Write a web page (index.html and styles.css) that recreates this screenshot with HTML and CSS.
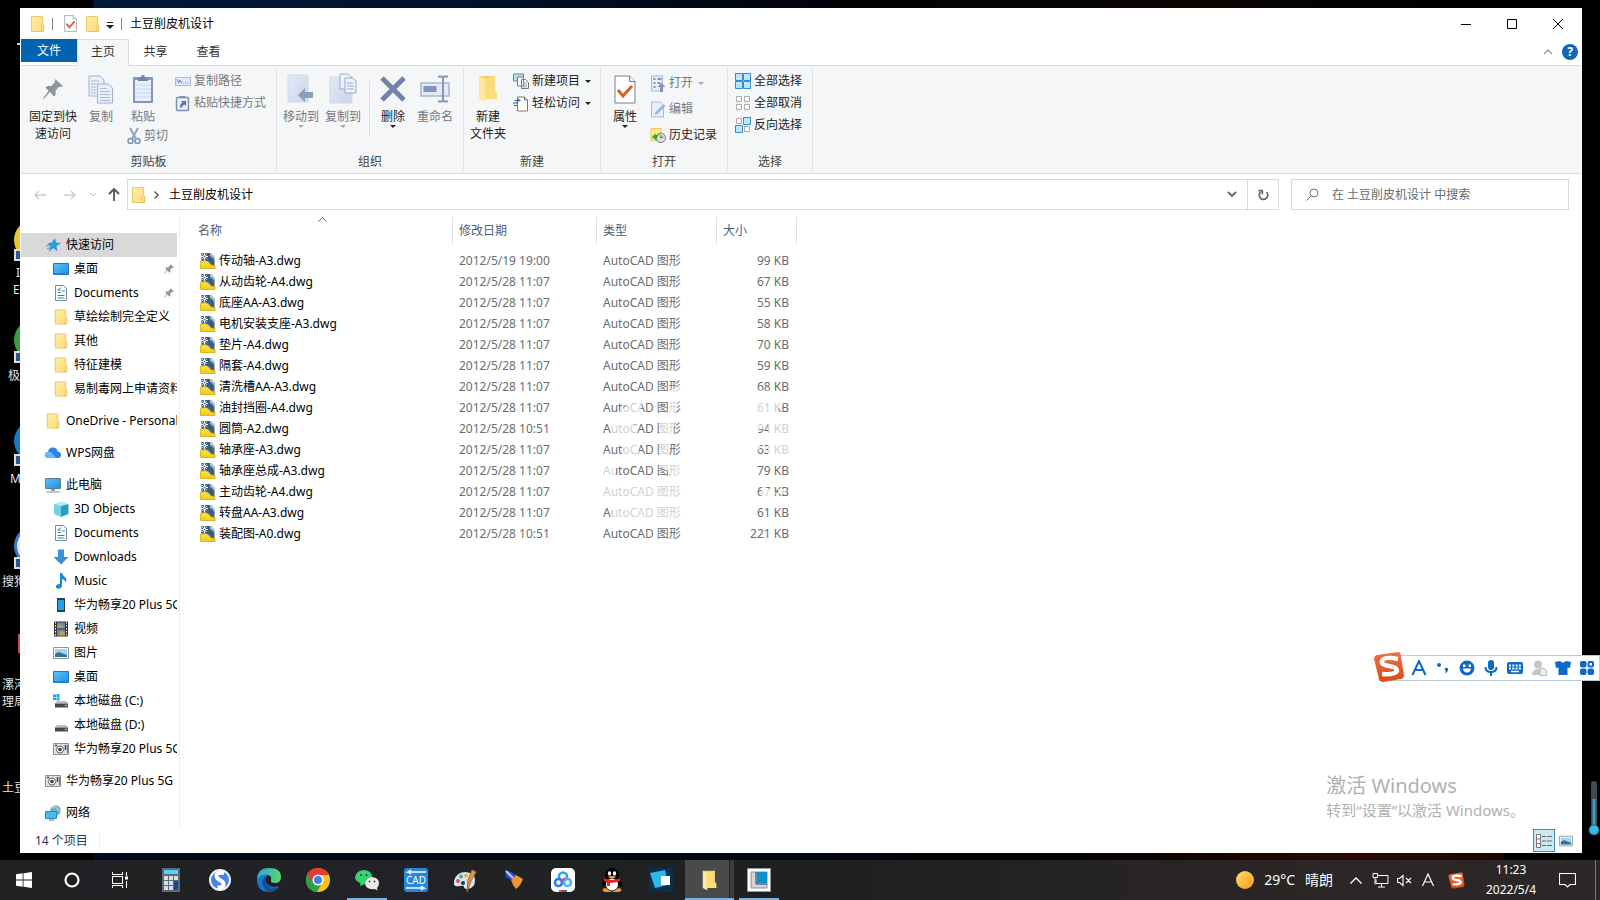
FILE: index.html
```html
<!DOCTYPE html>
<html lang="zh-CN">
<head>
<meta charset="utf-8">
<title>土豆削皮机设计</title>
<link rel="stylesheet" href="styles.css">
</head>
<body>
<svg class="defs" aria-hidden="true">
  <defs>
    <linearGradient id="gFolder" x1="0" y1="0" x2="1" y2="1"><stop offset="0" stop-color="#ffeeac"/><stop offset="1" stop-color="#fbdb75"/></linearGradient>
    <linearGradient id="gBlue" x1="0" y1="0" x2="1" y2="1"><stop offset="0" stop-color="#5cc4f8"/><stop offset="1" stop-color="#1d8ee0"/></linearGradient>
    <linearGradient id="gDwg" x1="0" y1="0" x2="0" y2="1"><stop offset="0" stop-color="#fbe25c"/><stop offset="1" stop-color="#f0cc10"/></linearGradient>
    <linearGradient id="gPale" x1="0" y1="0" x2="1" y2="1"><stop offset="0" stop-color="#e3eaf6"/><stop offset="1" stop-color="#c9d6ea"/></linearGradient>
    <linearGradient id="gSun" x1="0" y1="0" x2="1" y2="1"><stop offset="0" stop-color="#ffe06a"/><stop offset="1" stop-color="#f79a13"/></linearGradient>
    <linearGradient id="gEdge" x1="0" y1="0" x2="1" y2="0"><stop offset="0" stop-color="#2ba6e0"/><stop offset="1" stop-color="#5fd668"/></linearGradient>
    <linearGradient id="gSogou" x1="0" y1="0" x2="0" y2="1"><stop offset="0" stop-color="#ec7248"/><stop offset="1" stop-color="#dc4a12"/></linearGradient>
  </defs>
  <symbol id="folder" viewBox="0 0 16 18"><path d="M1.500 1h12v8.500l1 1V17h-13z" fill="url(#gFolder)" stroke="#e6c463"/><path d="M12.500 16.500v-6l1-1 1 1v6z" fill="#fff0b5" stroke="#dfb94c" stroke-width=".8"/></symbol>
  <symbol id="openfolder" viewBox="0 0 20 28"><path d="M1 1h16v15l2 2v6H6z" fill="#f7cf60"/><path d="M1 1l6 3v23l-6-3z" fill="#ffe9a2"/><path d="M7 4l10-3v15l2 2v6H7z" fill="#fbdc7d"/></symbol>
  <symbol id="pin" viewBox="0 0 20 20"><path d="M12 0l8 7-2 1-2-.3-3.500 4 .2 4L11 17.500 7 13 .8 20 0 19.500 5.500 12 2.500 8.500 4.500 7h4l3.500-4z" fill="#8d959e"/></symbol>
  <symbol id="check" viewBox="0 0 22 29"><path d="M1 1h14.500L21 6.500V28H1z" fill="#fff" stroke="#7d8186"/><path d="M15.500 1v5.500H21" fill="#f3f3f3" stroke="#7d8186"/><path d="M4 15l5 6 9-10" fill="none" stroke="#d8602b" stroke-width="3"/></symbol>
  <symbol id="copy" viewBox="0 0 26 29"><g fill="#e9f0fa" stroke="#9db2d0"><path d="M1 1h11l4 4v16H1z"/><path d="M9.500 9h11l4 4v15h-15z"/></g><path d="M3 6h8M3 9h6M3 12h5M3 15h5M3 18h5M12 13.500h7M12 16.500h10M12 19.500h10M12 22.500h10M12 25.500h10" stroke="#a9bbd6"/></symbol>
  <symbol id="paste" viewBox="0 0 22 30"><rect x="1" y="3" width="20" height="26" rx="1" fill="#8397b8"/><path d="M3 6h16v21H3z" fill="#e8effa"/><path d="M3 11h16M3 15h16M3 19h16M3 23h16" stroke="#c9d7eb"/><path d="M6 7V4h3q0-3 2-3t2 3h3v3z" fill="#7185a6"/></symbol>
  <symbol id="cut" viewBox="0 0 14 18"><path d="M3 1l6 11M11 1L5 12" stroke="#8ca3c4" stroke-width="2"/><circle cx="3.500" cy="14" r="2.500" fill="none" stroke="#7a92b8" stroke-width="1.500"/><circle cx="10.500" cy="14" r="2.500" fill="none" stroke="#7a92b8" stroke-width="1.500"/></symbol>
  <symbol id="path" viewBox="0 0 16 16"><rect x=".5" y="4.500" width="15" height="8" fill="#e0eafa" stroke="#a9bedd"/><path d="M2 6l1.500 4L5 7l1.500 3M7.500 10h1M10 10h1M12.500 10h1" fill="none" stroke="#7088ae"/></symbol>
  <symbol id="shortcut" viewBox="0 0 16 17"><rect x="1.500" y="2.500" width="12" height="13" rx="1" fill="#e8effa" stroke="#7c92b5" stroke-width="1.500"/><path d="M4.500 3V1h6v2z" fill="#7c92b5"/><path d="M5 12.500q0-4 2.500-5L6 6h5v5L9.500 9.500Q7 10.500 7 12.500z" fill="#5874a3"/></symbol>
  <symbol id="moveto" viewBox="0 0 28 30"><path d="M1 1h20v27H1z" fill="url(#gPale)" stroke="#d0daea"/><path d="M11 21l7-7v4h8v6h-8v4z" fill="#8b9ebd"/></symbol>
  <symbol id="copyto" viewBox="0 0 28 32"><path d="M1 4h22v26H1z" fill="url(#gPale)" stroke="#d0daea"/><g fill="#edf3fb" stroke="#97abc9"><path d="M11 1h8l3 3v12H11z"/><path d="M16 5h7.500l3.500 3v12H16z"/></g><path d="M18 10h6M18 13h7M18 16h7" stroke="#97abc9"/></symbol>
  <symbol id="delete" viewBox="0 0 26 26"><path d="M2 2l22 22M24 2L2 24" stroke="#7184a8" stroke-width="5"/></symbol>
  <symbol id="rename" viewBox="0 0 30 28"><path d="M1 8h28v13H1z" fill="#e3ebf8" stroke="#a7b8d2" stroke-width="1.500"/><path d="M3.500 11h13v6h-13z" fill="#8095ba"/><path d="M18 1.500h3q2 0 2 2v21q0 2-2 2h-3M28 1.500h-3q-2 0-2 2M28 26.500h-3q-2 0-2-2" fill="none" stroke="#8797b2" stroke-width="2"/></symbol>
  <symbol id="newitem" viewBox="0 0 16 16"><path d="M.5 1h10v7H.5z" fill="#bcdff3" stroke="#4a8db5"/><path d="M4.500 4h6v9h-6zM8.500 6.500h4l3 3v6h-7z" fill="#fff" stroke="#777"/><path d="M10 10h4M10 12h4M10 14h4" stroke="#999"/></symbol>
  <symbol id="easy" viewBox="0 0 16 17"><path d="M4.500 2h7l3 3v11h-10z" fill="#fff" stroke="#777"/><path d="M11.500 2v3h3" fill="none" stroke="#777"/><path d="M0 8h4l2-4M1.500 5.500h6M1 10.500h3" stroke="#1d62ad" stroke-width="1.200" fill="none"/></symbol>
  <symbol id="open" viewBox="0 0 15 17"><path d="M1 1h11v15H1z" fill="#e7effa" stroke="#a8b8d2"/><path d="M3 4h2M7 4h4M3 8h2M7 8h3M3 12h2" stroke="#7d93b7" stroke-width="2"/><path d="M11 8l4 4h-2.500v5h-3v-5H7z" fill="#8194b4"/></symbol>
  <symbol id="edit" viewBox="0 0 15 17"><path d="M1 1h9l3 3v12H1z" fill="#e7effa" stroke="#a8b8d2"/><path d="M4 14l1-3 8-8 2 2-8 8z" fill="#a0b5d5"/></symbol>
  <symbol id="history" viewBox="0 0 17 17"><path d="M1 1h11v13H1z" fill="#ffe88b" stroke="#e6c95e"/><circle cx="11.500" cy="11" r="5" fill="#ddd" stroke="#777"/><path d="M11.500 8v3l2.500-1" stroke="#555" fill="none"/><path d="M2 10l4-4v2.500q3-2 5-1.500-4 2-4 7z" fill="#31a83b"/></symbol>
  <symbol id="selall" viewBox="0 0 16 16"><g fill="#bfe5fa" stroke="#2f8fcd"><path d="M.5.5h7v7h-7zM8.500.5h7v7h-7zM.5 8.500h7v7h-7zM8.500 8.500h7v7h-7z"/></g></symbol>
  <symbol id="selnone" viewBox="0 0 16 16"><g fill="#fff" stroke="#aaa"><path d="M1.500 1.500h5v5h-5zM9.500 1.500h5v5h-5zM1.500 9.500h5v5h-5zM9.500 9.500h5v5h-5z"/></g></symbol>
  <symbol id="selinv" viewBox="0 0 16 16"><path d="M1.500 1.500h5v5h-5zM9.500 9.500h5v5h-5z" fill="#fff" stroke="#aaa"/><path d="M8.500.5h7v7h-7zM.5 8.500h7v7h-7z" fill="#bfe5fa" stroke="#2f8fcd"/></symbol>
  <symbol id="star" viewBox="0 0 16 16"><path d="M10 1l1 4.500 5 .5-4.500 3 1 5.500L8.500 11l-5 4 2-5.500L2.500 6l4-.3z" fill="#2f97dd"/><path d="M1 9l4-1M2 12l3-1.500" stroke="#2f97dd"/></symbol>
  <symbol id="desktop" viewBox="0 0 16 16"><path d="M.5 2.500h15v11H.5z" fill="url(#gBlue)" stroke="#1878c0"/><path d="M1 12.500h14" stroke="#0e6fb8" stroke-dasharray="1 2"/></symbol>
  <symbol id="doc" viewBox="0 0 16 16"><path d="M2.500.5h8l3 3v12h-11z" fill="#fff" stroke="#7e8a91"/><path d="M4.500 5h3M4.500 7.500h3M9 6h3M4.500 10.500h7M4.500 13h7" stroke="#2c87b8" stroke-width="1.200"/><path d="M5 5l3-2.500" stroke="#2c87b8"/></symbol>
  <symbol id="cloud" viewBox="0 0 16 16"><path d="M3.500 13Q0 13 0 10t3-3q1-5 5-4.500 4 0 4.500 4 3.500.5 3.500 3.500t-3 3z" fill="#2d83e8"/><path d="M3 7q3-1 5 2l3 4H4Q0 13 0 10t3-3z" fill="#69b6ff"/></symbol>
  <symbol id="pc" viewBox="0 0 16 16"><path d="M.5 1.500h15v10H.5z" fill="url(#gBlue)" stroke="#5f7d8e"/><path d="M6 12h4v2H6z" fill="#8ba0ac"/><path d="M1 15h14" stroke="#8a979f"/></symbol>
  <symbol id="cube" viewBox="0 0 16 16"><path d="M1 3l8-2.500L15.500 3 8 5z" fill="#b4ecf4"/><path d="M1 3l7 2v11l-7-3z" fill="#6dd5e4"/><path d="M8 5l7.500-2v10L8 16z" fill="#21a3ba"/></symbol>
  <symbol id="down" viewBox="0 0 16 16"><path d="M5 .5h6V8h4.500L8 15.500.5 8H5z" fill="#3c8fd8"/></symbol>
  <symbol id="music" viewBox="0 0 16 16"><path d="M7 0h2q1 3 4 5 1 2-.5 5 0-3-3.500-4v6.500Q8.500 16 5 15.800 2 15 3 12.500q1.500-2 4-1.500z" fill="#168ddc"/></symbol>
  <symbol id="phone" viewBox="0 0 16 16"><rect x="4" y="1" width="8" height="14" fill="#303c46"/><path d="M5 3h6v10H5z" fill="#1ea0ef"/></symbol>
  <symbol id="video" viewBox="0 0 16 16"><path d="M1 .5h14v15H1z" fill="#333"/><path d="M2.500 1v14M13.500 1v14" stroke="#fff" stroke-dasharray="1.500 1.500"/><path d="M4 1.500h8v6H4zM4 8.500h8v6H4z" fill="#6489b8"/><path d="M4 5l3-2 4 4H4zM8 10l4 1v3.500H5z" fill="#c29b45"/></symbol>
  <symbol id="image" viewBox="0 0 16 16"><path d="M.5 2.500h15v11H.5z" fill="#fff" stroke="#8d969e"/><path d="M2 4h12v8H2z" fill="#a6d2ed"/><path d="M2 9q4-3 6-1l6 2v2H2z" fill="#32738d"/></symbol>
  <symbol id="drive" viewBox="0 0 16 16"><path d="M4 8h9l2 2.500H2z" fill="#b9bfc3"/><path d="M2 10.500h13v4H2z" fill="#44494d"/><path d="M12 12.500h2" stroke="#6ee27b" stroke-width="1.500"/></symbol>
  <symbol id="drivec" viewBox="0 0 16 16"><path d="M0 1.500h3v2.500H0zM3.500 1h3v3h-3zM0 4.500h3V7H0zM3.500 4.500h3v3h-3z" fill="#21a8df"/><path d="M4 8h9l2 2.500H2z" fill="#b9bfc3"/><path d="M2 10.500h13v4H2z" fill="#44494d"/><path d="M12 12.500h2" stroke="#6ee27b" stroke-width="1.500"/></symbol>
  <symbol id="camera" viewBox="0 0 16 16"><path d="M.5 2.500h15v11H.5z" fill="#dce0e3" stroke="#8b9196"/><path d="M12.500 4v5" stroke="#444" stroke-width="1.500"/><path d="M14.500 4v8" stroke="#777"/><path d="M2 4.500h2" stroke="#444" stroke-width="1.500"/><circle cx="7" cy="8.500" r="3.500" fill="#f5f5f5" stroke="#666"/><circle cx="7" cy="8.500" r="1.800" fill="#345"/></symbol>
  <symbol id="network" viewBox="0 0 16 16"><circle cx="10.500" cy="5.500" r="5.300" fill="#7da9bf"/><path d="M7 3q3-3 5 0t3 3" stroke="#c9e4ee" fill="none"/><path d="M.5 6.500h11v7H.5z" fill="#45bdf2" stroke="#2c8bbc"/><path d="M4 15h5" stroke="#8aa0ad" stroke-width="1.500"/></symbol>
  <symbol id="dwg" viewBox="0 0 16 16"><path d="M1.500 0H11l3.500 4v9h-13z" fill="#3a5d82"/><path d="M10 0h1l3.500 4v4Q13 4 10 3z" fill="#a9c0d6"/><path d="M4.500 0v7M1 3.500h7" stroke="#fff" stroke-width="1.200"/><path d="M2 1l5 5M7 1L2 6" stroke="#dfe8f0" stroke-width=".8"/><circle cx="4.500" cy="3.500" r=".8" fill="#3a5d82"/><path d="M.5 8.500L5 7.500Q9 8 11 12l4 .5v3H.5z" fill="url(#gDwg)" stroke="#d3ab10" stroke-width=".8"/></symbol>
  <symbol id="sogou" viewBox="0 0 32 32"><path d="M4 4L25 1q2 0 2.500 2L31 24q0 3-3 4L10 31q-3 0-4-3L1 8q0-3 3-4z" fill="url(#gSogou)"/><path d="M25 8q-14-3-16 2-1 4 7 5t8 5q-2 4-15 3" fill="none" stroke="#fff" stroke-width="4.500"/></symbol>
</svg>

<main class="desktop">
  <div class="icons">
    <span class="spot mark a"></span>
    <span class="spot ball yellow"></span><span class="spot link l1"></span><span class="spot word w1">I</span><span class="spot word w2">E</span>
    <span class="spot ball green"></span><span class="spot link l2"></span><span class="spot word w3">极</span>
    <span class="spot ball blue"></span><span class="spot link l3"></span><span class="spot word w4">M</span>
    <span class="spot ball ring"></span><span class="spot link l4"></span><span class="spot word w5">搜狗</span>
    <span class="spot mark red"></span><span class="spot word w6">漯河<br>理局</span><span class="spot word w7">土豆</span>
  </div>

  <section class="window">
    <header class="titlebar">
      <svg class="i-folder"><use href="#folder"/></svg><i class="bar"></i>
      <button class="quick" aria-label="属性"><svg class="i-check"><use href="#check"/></svg></button>
      <button class="quick" aria-label="新建文件夹"><svg class="i-folder"><use href="#folder"/></svg></button>
      <button class="quick more" aria-label="自定义快速访问工具栏"><svg width="8" height="7"><path d="M1 .5h6" stroke="#222"/><path d="M0 3h8L4 7z" fill="#222"/></svg></button>
      <i class="bar"></i>
      <h1>土豆削皮机设计</h1>
      <div class="controls">
        <button aria-label="最小化"><svg width="10" height="10"><path d="M0 5.500h10" stroke="#000"/></svg></button>
        <button aria-label="最大化"><svg width="10" height="10"><path d="M.5.5h9v9h-9z" fill="none" stroke="#000"/></svg></button>
        <button aria-label="关闭"><svg width="10" height="10"><path d="M0 0l10 10M10 0L0 10" stroke="#000"/></svg></button>
      </div>
    </header>

    <nav class="tabs">
      <button class="file">文件</button><button class="on">主页</button><button>共享</button><button>查看</button>
      <div class="help">
        <button aria-label="折叠功能区"><svg width="8" height="6"><path d="M0 5l4-4 4 4" fill="none" stroke="#999" stroke-width="1.300"/></svg></button>
        <button class="q" aria-label="帮助">?</button>
      </div>
    </nav>

    <div class="ribbon">
      <div class="group">
        <div class="tools clip">
          <button class="big wide"><svg class="i-pin"><use href="#pin"/></svg><span>固定到快<br>速访问</span></button>
          <button class="big copy" disabled><svg width="26" height="29"><use href="#copy"/></svg><span>复制</span></button>
          <div class="pastecol">
            <button class="big" disabled><svg width="22" height="30"><use href="#paste"/></svg><span>粘贴</span></button>
            <button class="small" disabled><svg width="14" height="18"><use href="#cut"/></svg>剪切</button>
          </div>
          <div class="stack gap">
            <button class="small" disabled><svg width="16" height="16"><use href="#path"/></svg>复制路径</button>
            <button class="small" disabled><svg width="16" height="17"><use href="#shortcut"/></svg>粘贴快捷方式</button>
          </div>
        </div>
        <h2>剪贴板</h2>
      </div>
      <div class="group">
        <div class="tools org">
          <button class="big mid" disabled><svg width="28" height="30"><use href="#moveto"/></svg><span>移动到</span><i class="drop"></i></button>
          <button class="big mid" disabled><svg width="28" height="32"><use href="#copyto"/></svg><span>复制到</span><i class="drop"></i></button>
          <i class="split"></i>
          <button class="big mid"><svg width="26" height="26"><use href="#delete"/></svg><span>删除</span><i class="drop"></i></button>
          <button class="big mid" disabled><svg width="30" height="28"><use href="#rename"/></svg><span>重命名</span></button>
        </div>
        <h2>组织</h2>
      </div>
      <div class="group">
        <div class="tools">
          <button class="big wide2"><svg width="20" height="28"><use href="#openfolder"/></svg><span>新建<br>文件夹</span></button>
          <div class="stack">
            <button class="small"><svg width="16" height="16"><use href="#newitem"/></svg>新建项目<i class="drop"></i></button>
            <button class="small"><svg width="16" height="17"><use href="#easy"/></svg>轻松访问<i class="drop"></i></button>
          </div>
        </div>
        <h2>新建</h2>
      </div>
      <div class="group">
        <div class="tools">
          <button class="big wide2"><svg width="22" height="29"><use href="#check"/></svg><span>属性</span><i class="drop"></i></button>
          <div class="stack tall">
            <button class="small" disabled><svg width="16" height="17"><use href="#open"/></svg>打开<i class="drop"></i></button>
            <button class="small" disabled><svg width="16" height="17"><use href="#edit"/></svg>编辑</button>
            <button class="small"><svg width="16" height="17"><use href="#history"/></svg>历史记录</button>
          </div>
        </div>
        <h2>打开</h2>
      </div>
      <div class="group">
        <div class="tools sel">
          <div class="stack">
            <button class="small"><svg width="16" height="16"><use href="#selall"/></svg>全部选择</button>
            <button class="small"><svg width="16" height="16"><use href="#selnone"/></svg>全部取消</button>
            <button class="small"><svg width="16" height="16"><use href="#selinv"/></svg>反向选择</button>
          </div>
        </div>
        <h2>选择</h2>
      </div>
    </div>

    <div class="address">
      <button class="nav back" aria-label="后退"><svg width="12" height="10"><path d="M12 5H1M5 1L1 5l4 4" fill="none" stroke="#ccc" stroke-width="1.500"/></svg></button>
      <button class="nav fwd" aria-label="前进"><svg width="12" height="10"><path d="M0 5h11M7 1l4 4-4 4" fill="none" stroke="#ccc" stroke-width="1.500"/></svg></button>
      <button class="nav rec" aria-label="最近位置"><svg width="6" height="4"><path d="M0 0l3 3 3-3" fill="none" stroke="#bbb"/></svg></button>
      <button class="nav up" aria-label="上移"><svg width="12" height="13"><path d="M6 13V1M1 6l5-5 5 5" fill="none" stroke="#555" stroke-width="1.800"/></svg></button>
      <div class="crumbs">
        <svg class="i-folder"><use href="#folder"/></svg>
        <svg width="5" height="8"><path d="M.5.500L4 4 .5 7.500" fill="none" stroke="#555" stroke-width="1.400"/></svg>
        <a href="#">土豆削皮机设计</a>
        <button class="hist" aria-label="以前的位置"><svg width="10" height="7"><path d="M1 1l4 4 4-4" fill="none" stroke="#666" stroke-width="1.800"/></svg></button>
        <button class="reload" aria-label="刷新"><svg width="12" height="12"><path d="M9.500 3a4.300 4.300 0 1 1-6 0M1.500 1.700h3.800v3.800" fill="none" stroke="#666" stroke-width="1.700"/></svg></button>
      </div>
      <label class="search"><svg width="13" height="13"><circle cx="8" cy="5" r="4" fill="none" stroke="#777"/><path d="M5 8l-4.500 4.500" stroke="#777"/></svg><input type="search" aria-label="搜索" placeholder="在 土豆削皮机设计 中搜索"></label>
    </div>

    <div class="content">
      <nav class="tree">
        <a class="on" href="#"><svg><use href="#star"/></svg>快速访问</a>
        <a class="sub" href="#"><svg><use href="#desktop"/></svg>桌面<svg class="tack"><use href="#pin"/></svg></a>
        <a class="sub" href="#"><svg><use href="#doc"/></svg>Documents<svg class="tack"><use href="#pin"/></svg></a>
        <a class="sub" href="#"><svg><use href="#folder"/></svg>草绘绘制完全定义</a>
        <a class="sub" href="#"><svg><use href="#folder"/></svg>其他</a>
        <a class="sub" href="#"><svg><use href="#folder"/></svg>特征建模</a>
        <a class="sub" href="#"><svg><use href="#folder"/></svg>易制毒网上申请资料</a>
        <a class="top" href="#"><svg><use href="#folder"/></svg>OneDrive - Personal</a>
        <a class="top" href="#"><svg><use href="#cloud"/></svg>WPS网盘</a>
        <a class="top" href="#"><svg><use href="#pc"/></svg>此电脑</a>
        <a class="sub" href="#"><svg><use href="#cube"/></svg>3D Objects</a>
        <a class="sub" href="#"><svg><use href="#doc"/></svg>Documents</a>
        <a class="sub" href="#"><svg><use href="#down"/></svg>Downloads</a>
        <a class="sub" href="#"><svg><use href="#music"/></svg>Music</a>
        <a class="sub" href="#"><svg><use href="#phone"/></svg>华为畅享20 Plus 5G</a>
        <a class="sub" href="#"><svg><use href="#video"/></svg>视频</a>
        <a class="sub" href="#"><svg><use href="#image"/></svg>图片</a>
        <a class="sub" href="#"><svg><use href="#desktop"/></svg>桌面</a>
        <a class="sub" href="#"><svg><use href="#drivec"/></svg>本地磁盘 (C:)</a>
        <a class="sub" href="#"><svg><use href="#drive"/></svg>本地磁盘 (D:)</a>
        <a class="sub" href="#"><svg><use href="#camera"/></svg>华为畅享20 Plus 5G</a>
        <a class="top" href="#"><svg><use href="#camera"/></svg>华为畅享20 Plus 5G</a>
        <a class="top" href="#"><svg><use href="#network"/></svg>网络</a>
      </nav>
      <div class="list">
        <table>
          <colgroup><col class="c1"><col class="c2"><col class="c3"><col class="c4"></colgroup>
          <thead><tr><th>名称<svg class="sort" width="9" height="5"><path d="M.5 4.500l4-4 4 4" fill="none" stroke="#666"/></svg></th><th>修改日期</th><th>类型</th><th>大小</th></tr></thead>
          <tbody>
            <tr><td><svg><use href="#dwg"/></svg>传动轴-A3.dwg</td><td>2012/5/19 19:00</td><td>AutoCAD 图形</td><td>99 KB</td></tr>
            <tr><td><svg><use href="#dwg"/></svg>从动齿轮-A4.dwg</td><td>2012/5/28 11:07</td><td>AutoCAD 图形</td><td>67 KB</td></tr>
            <tr><td><svg><use href="#dwg"/></svg>底座AA-A3.dwg</td><td>2012/5/28 11:07</td><td>AutoCAD 图形</td><td>55 KB</td></tr>
            <tr><td><svg><use href="#dwg"/></svg>电机安装支座-A3.dwg</td><td>2012/5/28 11:07</td><td>AutoCAD 图形</td><td>58 KB</td></tr>
            <tr><td><svg><use href="#dwg"/></svg>垫片-A4.dwg</td><td>2012/5/28 11:07</td><td>AutoCAD 图形</td><td>70 KB</td></tr>
            <tr><td><svg><use href="#dwg"/></svg>隔套-A4.dwg</td><td>2012/5/28 11:07</td><td>AutoCAD 图形</td><td>59 KB</td></tr>
            <tr><td><svg><use href="#dwg"/></svg>清洗槽AA-A3.dwg</td><td>2012/5/28 11:07</td><td>AutoCAD 图形</td><td>68 KB</td></tr>
            <tr><td><svg><use href="#dwg"/></svg>油封挡圈-A4.dwg</td><td>2012/5/28 11:07</td><td>AutoCAD 图形</td><td>61 KB</td></tr>
            <tr><td><svg><use href="#dwg"/></svg>圆筒-A2.dwg</td><td>2012/5/28 10:51</td><td>AutoCAD 图形</td><td>94 KB</td></tr>
            <tr><td><svg><use href="#dwg"/></svg>轴承座-A3.dwg</td><td>2012/5/28 11:07</td><td>AutoCAD 图形</td><td>63 KB</td></tr>
            <tr><td><svg><use href="#dwg"/></svg>轴承座总成-A3.dwg</td><td>2012/5/28 11:07</td><td>AutoCAD 图形</td><td>79 KB</td></tr>
            <tr><td><svg><use href="#dwg"/></svg>主动齿轮-A4.dwg</td><td>2012/5/28 11:07</td><td>AutoCAD 图形</td><td>67 KB</td></tr>
            <tr><td><svg><use href="#dwg"/></svg>转盘AA-A3.dwg</td><td>2012/5/28 11:07</td><td>AutoCAD 图形</td><td>61 KB</td></tr>
            <tr><td><svg><use href="#dwg"/></svg>装配图-A0.dwg</td><td>2012/5/28 10:51</td><td>AutoCAD 图形</td><td>221 KB</td></tr>
          </tbody>
        </table>
        <svg class="veil" width="200" height="144" aria-hidden="true"><path d="M58 12l24-7v8L70 16H58zM18 30l8-7 14-2-2 12 4 6-24-2zM67 20l9 0-3 18-8-2zM7 46l14-6 14 4 0 16-22-3zM57 42l16 0-2 10 8 4-22 3zM22 64l16-2-2 14-16 1zM57 62h12l-3 18h-9zM0 82l10 3 6 12-16 3zM57 82h26v18H70l-3-10-10-4zM0 103h84v18H0zM10 128l12-4h62v9l-8 6H28l-4-2H10zM151 9l34 1v6h-34zM151 20h15v16h-15zM166 20l18 0-8 8 2 4h-12zM151 42h14l-2 6h-12zM166 40h24v40h-24zM151 64l8-2-2 8zM160 104l14 8-8 10-8-2zM176 108l8 0v5h-8z" fill="#fff" fill-opacity=".68"/></svg>
      </div>
    </div>

    <footer class="status"><span>14 个项目</span>
      <button class="view on" aria-label="详细信息"><svg width="16" height="14"><path d="M.5.5h4v13h-4zM.5 5h4M.5 9.500h4" fill="#fff" stroke="#777"/><path d="M6 2.500h4M11 2.500h5M6 7h4M11 7h5M6 11.500h4M11 11.500h5" stroke="#666"/></svg></button>
      <button class="view" aria-label="大图标"><svg width="14" height="14"><use href="#image"/></svg></button>
    </footer>
  </section>

  <aside class="activate"><strong>激活 Windows</strong><span>转到“设置”以激活 Windows。</span></aside>

  <div class="ime">
    <svg class="logo" width="32" height="32"><use href="#sogou"/></svg>
    <button aria-label="英文"><svg width="16" height="16"><path d="M1.500 15L8 1l6.500 14M4 10h8" fill="none" stroke="#0b69c7" stroke-width="2"/></svg></button>
    <button aria-label="标点"><svg width="16" height="16"><circle cx="4" cy="5" r="2" fill="#0b69c7"/><path d="M9.500 8.500q2-1.500 3.500 0 .5 3-3 5 1-2 .5-3z" fill="#0b69c7"/></svg></button>
    <button aria-label="表情"><svg width="16" height="16"><circle cx="8" cy="8" r="7.500" fill="#0b69c7"/><path d="M4 8.500h8q-.5 4-4 4t-4-4zM4 4.500h2.500V7H4zM9.500 4.500H12V7H9.500z" fill="#fff"/></svg></button>
    <button aria-label="语音"><svg width="16" height="16"><rect x="5" y="0" width="6" height="10" rx="3" fill="#0b69c7"/><path d="M2.500 7q0 5 5.500 5t5.500-5M8 12v4" fill="none" stroke="#0b69c7" stroke-width="2"/></svg></button>
    <button aria-label="软键盘"><svg width="16" height="16"><rect x="0" y="2" width="16" height="12" rx="2" fill="#0b69c7"/><path d="M2 5.500h12M2 8.500h12" stroke="#fff" stroke-width="2" stroke-dasharray="2 1.300"/><path d="M4 11.500h8" stroke="#fff" stroke-width="1.500"/></svg></button>
    <button aria-label="用户"><svg width="16" height="16"><circle cx="7" cy="4.500" r="4" fill="#c6c6c6"/><path d="M1 15q0-6 6-6 3 0 4 1v5z" fill="#c6c6c6"/><path d="M9 8.500h4l2.500 2v5H9z" fill="#eee" stroke="#bbb"/></svg></button>
    <button aria-label="皮肤"><svg width="16" height="16"><path d="M0 2l5-1q3 3 6 0l5 1-1 6-2.500-.500V15h-9V7.500L1 8z" fill="#0b69c7"/></svg></button>
    <button aria-label="工具箱"><svg width="16" height="16"><g fill="#0b69c7"><rect x="1" y="1" width="6.500" height="6.500" rx="2"/><rect x="1" y="8.500" width="6.500" height="6.500" rx="2"/><rect x="8.500" y="8.500" width="6.500" height="6.500" rx="2"/></g><rect x="9.500" y="2" width="4.500" height="4.500" rx="1" fill="none" stroke="#0b69c7" stroke-width="2"/></svg></button>
  </div>
  <svg class="volume" width="12" height="56" aria-hidden="true"><rect x="3" y="0" width="6" height="52" rx="3" fill="#414a54"/><path d="M6 18v30" stroke="#3d9bc4" stroke-width="3"/><circle cx="6" cy="49" r="5" fill="#36b8e8" stroke="#256a85"/></svg>
</main>

<footer class="taskbar">
  <button class="sys" aria-label="开始"><svg width="16" height="16"><path d="M0 2.300l6.700-1v6.200H0zM7.500 1.200L16 0v7.500H7.500zM0 8.400h6.700v6.300L0 13.700zM7.500 8.400H16V16l-8.500-1.200z" fill="#fff"/></svg></button>
  <button class="sys" aria-label="搜索"><svg width="16" height="16"><circle cx="8" cy="8" r="6.500" fill="none" stroke="#fff" stroke-width="2.200"/></svg></button>
  <button class="sys" aria-label="任务视图"><svg width="16" height="16"><path d="M.5 0v2.500h10V0M.5 16v-2.500h10V16M.5 4.500h10v7H.5zM14.500 0v4M14.500 9v7" fill="none" stroke="#fff" stroke-width="1.100"/><path d="M13 4.500h3v3h-3z" fill="#fff"/></svg></button>
  <div class="apps">
    <button aria-label="计算器"><svg viewBox="0 0 24 24"><path d="M3 0h18v24H3z" fill="#5c6b78"/><path d="M5 2h14v4H5z" fill="#58d0f5"/><path d="M5 8h4v4H5zM10 8h4v4h-4zM15 8h4v4h-4zM5 13h4v4H5zM10 13h4v4h-4zM5 18h4v4H5zM10 18h4v4h-4z" fill="#d8dee4"/><path d="M15 13h4v9h-4z" fill="#134b8c"/></svg></button>
    <button aria-label="搜狗浏览器"><svg viewBox="0 0 24 24"><circle cx="12" cy="12" r="10" fill="#4a86dc" stroke="#eef5fd" stroke-width="2"/><path d="M16 5Q8 4 8.500 8q.5 3 4 4.500t3 4.500q-1 3-6 2.500" fill="none" stroke="#fff" stroke-width="4"/></svg></button>
    <button aria-label="Edge"><svg viewBox="0 0 24 24"><path d="M0 12Q0 0 12 0q12 0 12 9 0 6-6 6-5 0-4-3 1-4-3-5Q5 6 0 12z" fill="url(#gEdge)"/><path d="M0 12Q4 6 11 7q-5 4-1 9 5 5 12 2-4 6-11 6Q0 23 0 12z" fill="#1676ce"/><path d="M10 8q-7 3-4 10 2 4 6 6 6 0 10-5-6 3-11-1-4-5-1-10z" fill="#134f9e"/></svg></button>
    <button aria-label="Chrome"><svg viewBox="0 0 24 24"><circle cx="12" cy="12" r="12" fill="#fbc618"/><path d="M1.600 6A12 12 0 0 1 22.400 6H12z" fill="#e33b2e"/><path d="M1.600 6A12 12 0 0 0 11 24l5-9-8-1z" fill="#2aa14c"/><path d="M1.600 6l5.500 9L12 7h10.400A12 12 0 0 0 1.600 6z" fill="#e33b2e"/><circle cx="12" cy="12" r="5.500" fill="#fff"/><circle cx="12" cy="12" r="4" fill="#3f7fe8"/></svg></button>
    <button class="run" aria-label="微信"><svg viewBox="0 0 24 24"><path d="M8.500 2q8 0 8.500 7-7 0-7 7l-5 2 .5-3Q0 13 0 9q1-6 8.500-7z" fill="#35d373"/><path d="M17 9q7 1 7 6 0 3-2 5l.5 2.500-3-1.500q-9 1-9.500-6 1-6 7-6z" fill="#e8e8e8"/><g fill="#244"><circle cx="6" cy="7" r="1"/><circle cx="11.500" cy="7" r="1"/><circle cx="14.500" cy="13.500" r=".9"/><circle cx="19.500" cy="13.500" r=".9"/></g></svg></button>
    <button aria-label="CAD转换"><svg viewBox="0 0 24 24"><rect width="24" height="24" rx="3" fill="#2489da"/><path d="M22 4H4l3-2M4 4l3 2M2 20h18l-3-2M20 20l-3 2" fill="none" stroke="#fff" stroke-width="1.500"/><text x="12" y="16" text-anchor="middle" fill="#fff" font-size="10">CAD</text></svg></button>
    <button aria-label="画图"><svg viewBox="0 0 24 24"><path d="M1 13q2-9 12-9 9 1 9 8 0 8-7 9-4 0-4-2t-4-1-6-1q0-2 0-4z" fill="#d6e6f0"/><circle cx="5" cy="13" r="2" fill="#d8594a"/><circle cx="8" cy="8.500" r="2" fill="#60ad61"/><circle cx="13" cy="7.500" r="2" fill="#e9b242"/><circle cx="10" cy="15" r="2" fill="#26394a"/><path d="M19 2l4 2-5 9-4 11 1-12z" fill="#d99750" stroke="#a56c35"/></svg></button>
    <button aria-label="清理"><svg viewBox="0 0 24 24"><path d="M3 2l1 7 5 3 5-5-5-3z" fill="#294cd9"/><path d="M4 3l7 7" stroke="#b9cff5" stroke-width="2"/><path d="M9 12l5-5 7 4q-2 6-7 10-3-3-5-9z" fill="#f09435"/></svg></button>
    <button aria-label="百度网盘"><svg viewBox="0 0 24 24"><rect width="24" height="24" rx="5" fill="#fff"/><g fill="none" stroke-width="2.600"><circle cx="12" cy="8.500" r="4" stroke="#28a2ef"/><circle cx="7.500" cy="14.500" r="3.500" stroke="#267fe8"/><circle cx="16.500" cy="14.500" r="3.500" stroke="#4cb7f4"/></g><path d="M10 13l4-3" stroke="#e6455d" stroke-width="2"/><path d="M8 24v-2h4v2z" fill="#e44"/><path d="M12 24v-2h4v2z" fill="#27c"/></svg></button>
    <button aria-label="QQ"><svg viewBox="0 0 24 24"><ellipse cx="7.500" cy="22" rx="5" ry="2" fill="#f19a27"/><ellipse cx="16.500" cy="22" rx="5" ry="2" fill="#f19a27"/><path d="M5 9Q5 0 12 0t7 9q4 6 3 10-2-1-3-3-1 7-7 7t-7-7q-1 3-3 2 0-5 3-9z" fill="#050505"/><ellipse cx="12" cy="16.500" rx="6" ry="6" fill="#fff"/><path d="M4 10q8 4 16 0v3q-5 2-10 2v3H7v-4l-3-1z" fill="#e3262d"/><ellipse cx="9.500" cy="5.500" rx="1.600" ry="2.200" fill="#fff"/><ellipse cx="14.500" cy="5.500" rx="1.600" ry="2.200" fill="#fff"/><path d="M8 9q4-2 8 0-4 3-8 0z" fill="#f0a32a"/></svg></button>
    <button aria-label="便笺"><svg viewBox="0 0 24 24"><path d="M0 0h24v24H0z" fill="#06304b"/><path d="M1 5l15-3 3 15-13 3z" fill="#32b8e8"/><path d="M12 8h9v9h-9z" fill="#fff"/></svg></button>
    <button class="run active" aria-label="文件资源管理器"><svg class="fold"><use href="#openfolder"/></svg></button>
    <button class="run" aria-label="窗口"><svg viewBox="0 0 24 24"><path d="M.5.500h23v23H.5z" fill="#fff" stroke="#999"/><path d="M4 4h16v16H4z" fill="#d3d7d9" stroke="#8b8f92"/><path d="M10 4h10v11H10z" fill="#0e8fce"/><path d="M9 4v12h11" stroke="#333" fill="none"/></svg></button>
  </div>
  <div class="tray">
    <button class="weather"><svg width="18" height="18"><circle cx="9" cy="9" r="9" fill="url(#gSun)"/></svg><span>29°C</span><span>晴朗</span></button>
    <button class="t" aria-label="隐藏的图标"><svg width="12" height="7"><path d="M.5 6.500L6 1l5.500 5.500" fill="none" stroke="#fff" stroke-width="1.300"/></svg></button>
    <button class="t" aria-label="网络"><svg width="17" height="15"><path d="M5 2.500h11v8H4v-4M1 .5h4.500v4H1zM3 4.500v7M9.500 10.500v3.500M6 14h7" fill="none" stroke="#fff"/></svg></button>
    <button class="t" aria-label="音量"><svg width="15" height="13"><path d="M.5 4.500h2l3.500-3v10L2.500 8.500h-2zM9 4l5 5M14 4L9 9" fill="none" stroke="#fff" stroke-width="1.100"/></svg></button>
    <button class="t" aria-label="输入法"><svg width="12" height="14"><path d="M.5 13L6 1l5.500 12M2.500 9h7" fill="none" stroke="#fff" stroke-width="1.200"/></svg></button>
    <button class="t so" aria-label="搜狗输入法"><svg width="17" height="17"><use href="#sogou"/></svg></button>
    <button class="clock"><span>11:23</span><span>2022/5/4</span></button>
    <button class="note" aria-label="通知"><svg width="17" height="17"><path d="M.5 1.500h16v11h-5.500L8.500 15 6 12.500H.5z" fill="none" stroke="#fff" stroke-width="1.100"/></svg></button>
  </div>
</footer>
</body>
</html>
```
FILE: styles.css
```css
* { box-sizing: border-box; }
body {
  margin: 0;
  height: 100vh;
  display: flex;
  flex-direction: column;
  overflow: hidden;
  background: #000;
  color: #000;
  font: 12px/16px "Noto Sans", "Noto Sans CJK SC", sans-serif;
}
button {
  margin: 0;
  padding: 0;
  border: 0;
  background: none;
  color: inherit;
  font: inherit;
}
a { color: inherit; text-decoration: none; }
svg { display: block; flex: none; }
.defs { position: absolute; width: 0; height: 0; }
.i-folder { width: 15px; height: 18px; }
.i-check { width: 13px; height: 17px; }
.i-pin { width: 20px; height: 20px; }

.desktop {
  position: relative;
  flex: 1;
  min-height: 0;
  display: flex;
  padding: 8px 18px 7px 20px;
  background:
    linear-gradient(90deg, #000 93px, #001a3c 94px, #00122b 30%, #020208 52%, #0a0400 75%, #000 94%) top / 100% 8px no-repeat,
    linear-gradient(90deg, #000 93px, #000c1c 94px, #020712 50%, #080200 70%, #2a0b02 85%, #1c0702 94%, #000 94%) bottom / 100% 8px no-repeat,
    #000;
}

/* Shortcuts that lie under the window */
.spot { position: absolute; }
.word { color: #e4e4e4; white-space: nowrap; line-height: 17px; }
.ball { left: 14px; width: 40px; height: 40px; border-radius: 50%; }
.yellow { top: 220px; background: #f0c52c; }
.green { top: 320px; background: #3d9a44; }
.blue { top: 421px; background: #1778c5; }
.ring { top: 526px; border: 3px solid #3b78c9; background: #dfe8f4; }
.link { left: 14px; width: 12px; height: 12px; border: 2px solid #ddd; background: #2f5590; }
.l1 { top: 249px; } .l2 { top: 351px; } .l3 { top: 454px; } .l4 { top: 557px; }
.w1 { left: 16px; top: 264px; } .w2 { left: 13px; top: 281px; } .w3 { left: 8px; top: 367px; }
.w4 { left: 10px; top: 470px; } .w5 { left: 2px; top: 573px; } .w6 { left: 2px; top: 676px; } .w7 { left: 2px; top: 779px; }
.mark { left: 17px; width: 6px; height: 2px; background: #ccc; }
.a { top: 43px; }
.red { left: 18px; top: 634px; height: 19px; background: #c94a4e; }

.window {
  position: relative;
  flex: 1;
  min-width: 0;
  display: flex;
  flex-direction: column;
  padding: 0 1px;
  background: #fff;
}
.titlebar { display: flex; align-items: center; height: 31px; padding-left: 9px; }
.titlebar .bar { width: 1px; height: 12px; margin: 0 11px 0 7px; background: #888; }
.titlebar h1 { margin: 0 auto 0 -3px; font-size: 12px; font-weight: 400; }
.quick { margin-right: 8px; }
.quick.more { margin: 3px 0 0 -2px; }
.controls { display: flex; align-self: stretch; }
.controls button { width: 46px; display: grid; place-items: center; }

.tabs { display: flex; height: 26px; }
.tabs > button { width: 53px; color: #333; }
.tabs > .file { width: 56px; height: 23px; background: #0063b1; color: #fff; }
.tabs > .on { width: 52px; height: 27px; z-index: 1; background: #f5f6f7; border: 1px solid #dadbdc; border-bottom: 0; padding-bottom: 2px; }
.help { margin-left: auto; display: flex; align-items: center; gap: 10px; padding-right: 3px; }
.help .q { width: 16px; height: 16px; border-radius: 50%; background: #0f68b8; color: #fff; font-weight: 700; line-height: 16px; }

.ribbon {
  display: grid;
  grid-template-columns: 256px 187px 137px 127px 85px;
  height: 109px;
  padding-bottom: 2px;
  background: #f5f6f7;
  border: solid #dadbdc;
  border-width: 1px 0;
}
.group { display: flex; flex-direction: column; margin-top: 2px; border-right: 1px solid #e0e1e3; }
.group h2 { margin: auto 0 0; font-size: 12px; font-weight: 400; line-height: 19px; text-align: center; color: #444; }
.tools { display: flex; align-items: flex-start; }
.tools.clip { padding-left: 4px; }
.tools.org { padding-left: 3px; }
.tools.sel { padding-left: 6px; }
.big {
  display: grid;
  grid-template-rows: 32px auto auto;
  align-content: start;
  justify-items: center;
  width: 38px;
  padding-top: 5px;
  line-height: 17px;
  color: #222;
  white-space: nowrap;
}
.big > svg { margin: auto; }
.big > span { margin-top: 3px; }
.big.copy { width: 40px; }
.big.wide { width: 56px; }
.big.mid { width: 42px; }
.big.wide2 { width: 48px; }
.pastecol { width: 46px; }
.pastecol .big { width: 44px; }
.pastecol .small { padding-left: 6px; }
.split { width: 1px; height: 55px; margin: 13px 2px 0 5px; background: #dcdee1; }
.drop { width: 0; height: 0; border: solid transparent; border-width: 3px 3px 0; border-top-color: #222; }
button:disabled { color: #76797d; }
button:disabled .drop { border-top-color: #aaa; }
.stack { padding-top: 2px; }
.stack.gap { margin-left: 7px; }
.small { display: flex; align-items: center; gap: 3px; height: 22px; padding-left: 1px; color: #222; white-space: nowrap; }
.small .drop { margin-left: 2px; }
.tall .small { height: 26px; }

.address { display: flex; align-items: center; height: 41px; padding: 0 12px 0 13px; }
.nav { display: grid; place-items: center; height: 30px; }
.back, .fwd { width: 30px; padding-right: 18px; }
.rec { width: 6px; margin-left: -4px; }
.up { width: 16px; margin: 0 5px 0 10px; }
.crumbs { flex: 1; display: flex; align-items: center; height: 31px; border: 1px solid #d9d9d9; padding-left: 3px; }
.crumbs a { margin: 0 auto 0 10px; }
.crumbs > svg + svg { margin-left: 8px; }
.hist { width: 30px; height: 100%; display: grid; place-items: center; }
.reload { width: 31px; height: 100%; border-left: 1px solid #d9d9d9; display: grid; place-items: center; }
.search { display: flex; align-items: center; width: 278px; height: 31px; margin-left: 12px; padding-left: 14px; border: 1px solid #d9d9d9; }
.search input { flex: 1; min-width: 0; margin-left: 13px; padding: 0; border: 0; outline: 0; background: none; font: inherit; }
.search input::placeholder { color: #6a6a6a; opacity: 1; }

.content { flex: 1; min-height: 0; display: flex; }
.tree { width: 159px; padding: 18px 2px 0 0; border-right: 1px solid #f0f0f0; overflow: hidden; }
.tree a { display: flex; align-items: center; gap: 5px; height: 24px; padding-left: 24px; overflow: hidden; white-space: nowrap; }
.tree a.sub { padding-left: 32px; }
.tree a.top { margin-top: 8px; }
.tree a.on { background: #d9d9d9; }
.tree svg { width: 16px; height: 16px; }
.tree .tack { width: 10px; height: 10px; margin: 0 3px 0 auto; }

.list { position: relative; flex: 1; padding: 2px 0 0 12px; }
table { border-collapse: separate; border-spacing: 0; table-layout: fixed; width: 605px; }
.c1 { width: 261px; } .c2 { width: 144px; } .c3 { width: 120px; } .c4 { width: 80px; }
th { position: relative; height: 28px; padding: 0 6px; border-right: 1px solid #e3e3e3; font-weight: 400; text-align: left; color: #4c607a; }
.sort { position: absolute; left: 126px; top: 0; }
tbody::before { content: ""; display: block; height: 5px; }
td { height: 21px; padding: 0 6px; color: #6d6d6d; white-space: nowrap; }
td:first-child { display: flex; align-items: center; gap: 3px; padding-left: 8px; color: #000; }
td:last-child { padding-right: 8px; text-align: right; }
td svg { width: 16px; height: 16px; }
.veil { position: absolute; left: 422px; top: 166px; }

.status { display: flex; align-items: center; height: 25px; padding: 0 4px 0 14px; color: #1e395b; }
.status span { margin-right: auto; padding-right: 11px; border-right: 1px solid #eee; }
.view { width: 22px; height: 23px; display: grid; place-items: center; }
.view.on { background: #cce8f5; border: 1px solid #3c93b0; }

.activate { position: absolute; right: 75px; bottom: 39px; display: flex; flex-direction: column; color: #b1b1b1; font-size: 15px; line-height: 22px; }
.activate strong { font-size: 20px; font-weight: 400; line-height: 26px; }

.ime { position: absolute; right: 0; top: 655px; display: flex; align-items: center; height: 26px; padding-left: 27px; border: 1px solid #b8cbdf; background: #fff; }
.ime .logo { position: absolute; left: -7px; top: -5px; }
.ime button { width: 24px; height: 24px; display: grid; place-items: center; }
.volume { position: absolute; right: 0; top: 781px; }

.taskbar { display: flex; height: 40px; background: linear-gradient(90deg, #1f2022, #222326 25%, #1e1f20 50%, #2b2625 80%, #2b2827); color: #fff; }
.taskbar button { display: grid; place-items: center; height: 40px; }
.sys { width: 48px; }
.apps { display: flex; margin-left: 2px; }
.apps button { width: 49px; }
.apps svg { width: 24px; height: 24px; }
.apps .fold { width: 15px; height: 21px; }
.run { background: linear-gradient(#76b1e0, #76b1e0) bottom / 40px 2px no-repeat; }
.run.active { background: linear-gradient(#76b1e0, #76b1e0) bottom / 100% 2px no-repeat, linear-gradient(90deg, #4a4a4b 44px, #222 44px, #222 45px, #3c3c3d 45px); }
.tray { display: flex; margin: 0 4px 0 auto; border-right: 1px solid #777; }
.tray .weather { display: flex; align-items: center; gap: 10px; margin-right: 11px; font-size: 14px; }
.tray .t { width: 24px; }
.tray .so { width: 33px; }
.tray .clock { width: 76px; grid-template-rows: 20px 20px; }
.tray .note { width: 36px; margin-right: 10px; }
```
